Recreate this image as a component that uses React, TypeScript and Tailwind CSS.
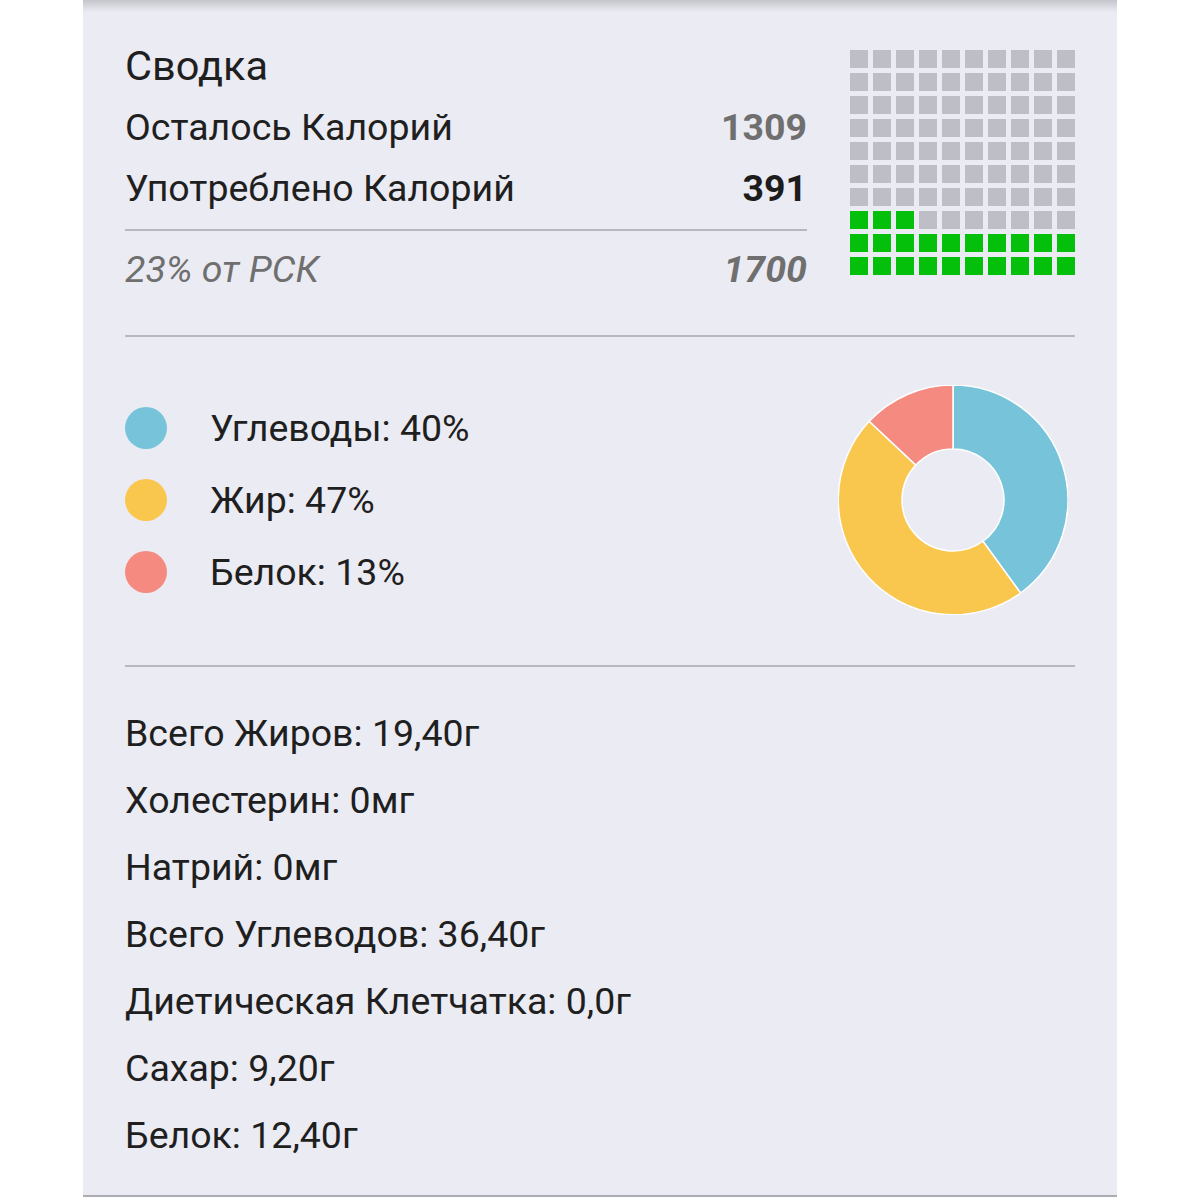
import React from "react";

const font = { fontFamily: "Roboto, 'Noto Sans', sans-serif" };

function Waffle() {
  const cells = [];
  for (let r = 0; r < 10; r++) {
    for (let c = 0; c < 10; c++) {
      const idxFromBottom = (9 - r) * 10 + c;
      const green = idxFromBottom < 23;
      cells.push(
        <div
          key={`${r}-${c}`}
          className={green ? "w-[18px] h-[18px] bg-[#05c00a]" : "w-[18px] h-[18px] bg-[#bdbec6]"}
        />
      );
    }
  }
  return <div className="grid grid-cols-[repeat(10,18px)] gap-[5px] mt-[38px]">{cells}</div>;
}

function Donut() {
  return (
    <svg width="230" height="230" viewBox="0 0 230 230" className="mr-[7px]">
      <path d="M115 0 A115 115 0 0 1 182.6 208.0 L144.98 156.26 A51 51 0 0 0 115 64 Z" fill="#76c3da" stroke="#ffffff" strokeWidth="1.5" />
      <path d="M182.6 208.0 A115 115 0 0 1 31.2 36.3 L77.82 80.09 A51 51 0 0 0 144.98 156.26 Z" fill="#f9c64e" stroke="#ffffff" strokeWidth="1.5" />
      <path d="M31.2 36.3 A115 115 0 0 1 115 0 L115 64 A51 51 0 0 0 77.82 80.09 Z" fill="#f48a80" stroke="#ffffff" strokeWidth="1.5" />
    </svg>
  );
}

export default function App() {
  const legend = [
    { color: "bg-[#76c3da]", label: "Углеводы: 40%" },
    { color: "bg-[#f9c64e]", label: "Жир: 47%" },
    { color: "bg-[#f48a80]", label: "Белок: 13%" },
  ];
  const items = [
    "Всего Жиров: 19,40г",
    "Холестерин: 0мг",
    "Натрий: 0мг",
    "Всего Углеводов: 36,40г",
    "Диетическая Клетчатка: 0,0г",
    "Сахар: 9,20г",
    "Белок: 12,40г",
  ];
  return (
    <div className="w-[1200px] h-[1200px] bg-white" style={font}>
      <div className="ml-[83px] w-[1034px] h-[1197px] bg-[#ebebf3] border-b-2 border-[#ababb3] flex flex-col">
        <div className="h-[12px] bg-gradient-to-b from-[#c4c4cb] to-[#ebebf3]" />
        <div className="px-[42px] flex flex-col text-[#1f1f1f]">
          <div className="flex items-start gap-[43px]">
            <div className="w-[682px] flex flex-col pt-[24px]">
              <div className="h-[61px] flex items-center text-[41.5px]">Сводка</div>
              <div className="h-[61px] flex items-center justify-between text-[37.5px]">
                <span>Осталось Калорий</span>
                <span className="font-bold text-[#6f6f6f]">1309</span>
              </div>
              <div className="h-[61px] flex items-center justify-between text-[37.5px]">
                <span>Употреблено Калорий</span>
                <span className="font-bold text-[#1c1c1c]">391</span>
              </div>
              <div className="mt-[10px] h-[2px] bg-[#b7b7bf]" />
              <div className="mt-[8px] h-[61px] flex items-center justify-between text-[37.5px] italic text-[#6f6f6f]">
                <span>23% от РСК</span>
                <span className="font-bold">1700</span>
              </div>
            </div>
            <Waffle />
          </div>
          <div className="mt-[35px] h-[2px] bg-[#b7b7bf]" />
          <div className="flex items-center justify-between pt-[48px] pb-[50px]">
            <div className="flex flex-col">
              {legend.map((l) => (
                <div key={l.label} className="h-[72px] flex items-center gap-[43px] text-[37.5px]">
                  <div className={`w-[42px] h-[42px] rounded-full ${l.color}`} />
                  <span>{l.label}</span>
                </div>
              ))}
            </div>
            <Donut />
          </div>
          <div className="h-[2px] bg-[#b7b7bf]" />
          <div className="flex flex-col mt-[33px]">
            {items.map((t) => (
              <div key={t} className="h-[67px] flex items-center text-[37.5px]">
                {t}
              </div>
            ))}
          </div>
        </div>
      </div>
    </div>
  );
}
